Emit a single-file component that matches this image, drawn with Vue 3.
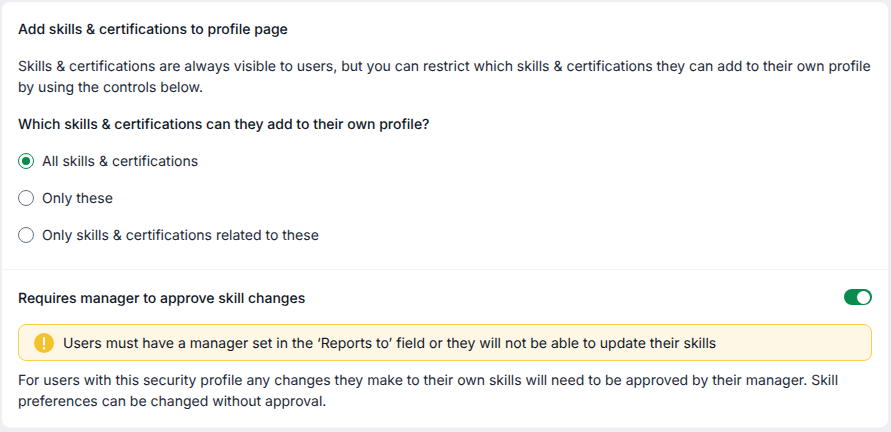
<script setup>
const options = [
  { label: 'All skills & certifications', checked: true },
  { label: 'Only these', checked: false },
  { label: 'Only skills & certifications related to these', checked: false },
]
</script>

<template>
  <div class="page">
    <div class="card">
      <section class="top">
        <h3 class="title">Add skills &amp; certifications to profile page</h3>
        <p class="text">Skills &amp; certifications are always visible to users, but you can restrict which skills &amp; certifications they can add to their own profile by using the controls below.</p>
        <h4 class="title">Which skills &amp; certifications can they add to their own profile?</h4>
        <div class="radios">
          <label v-for="o in options" :key="o.label" class="radio">
            <span class="dot" :class="{ on: o.checked }"></span>
            <span>{{ o.label }}</span>
          </label>
        </div>
      </section>
      <section class="bottom">
        <div class="row">
          <h3 class="title">Requires manager to approve skill changes</h3>
          <span class="toggle"><span class="knob"></span></span>
        </div>
        <div class="alert">
          <svg class="icon" width="20" height="20" viewBox="0 0 20 20">
            <circle cx="10" cy="10" r="10" fill="#f4c22b" />
            <rect x="9" y="4" width="2" height="8.5" rx="1" fill="#fff" />
            <circle cx="10" cy="15.2" r="1.2" fill="#fff" />
          </svg>
          <span class="alert-text">Users must have a manager set in the ‘Reports to’ field or they will not be able to update their skills</span>
        </div>
        <p class="text note">For users with this security profile any changes they make to their own skills will need to be approved by their manager. Skill preferences can be changed without approval.</p>
      </section>
    </div>
  </div>
</template>

<style>
html, body { margin: 0; background: #eeeef3; }
</style>

<style scoped>
.page {
  width: 891px;
  height: 432px;
  box-sizing: border-box;
  padding: 2px 3px 4px 2px;
  background: #eeeef3;
  font-family: Inter, "Liberation Sans", sans-serif;
  font-size: 14px;
  line-height: 21px;
  color: #101828;
  text-rendering: geometricPrecision;
}
.card {
  height: 426px;
  box-sizing: border-box;
  background: #fff;
  border-radius: 8px;
  border-bottom: 1px solid #f4f4f6;
  overflow: hidden;
}
.top {
  padding: 16.5px 16px 23.5px;
  border-bottom: 1px solid #f3f3f6;
}
.bottom { padding: 17.5px 16px 0; }
.title { margin: 0; font-size: 14px; line-height: 21px; font-weight: 460; }
.text { margin: 16px 0; color: #1d2939; }
.note { margin: 8.5px 0 0; }
.radios { display: flex; flex-direction: column; gap: 16px; margin-top: 16px; }
.radio { display: flex; align-items: center; gap: 8px; color: #1d2939; }
.dot {
  width: 16px;
  height: 16px;
  box-sizing: border-box;
  border: 1px solid #667085;
  border-radius: 50%;
  background: #fff;
  display: flex;
  align-items: center;
  justify-content: center;
}
.dot.on { border-color: #098a4e; }
.dot.on::after {
  content: "";
  width: 8px;
  height: 8px;
  border-radius: 50%;
  background: #098a4e;
}
.row { display: flex; align-items: center; justify-content: space-between; }
.toggle {
  width: 28px;
  height: 16px;
  margin-bottom: 2px;
  box-sizing: border-box;
  padding: 1.5px 2px;
  border-radius: 8px;
  background: #098a4e;
  display: flex;
  justify-content: flex-end;
}
.knob { width: 13px; height: 13px; border-radius: 50%; background: #fff; }
.alert {
  margin-top: 15.5px;
  height: 37px;
  box-sizing: border-box;
  padding: 1px 15px 0;
  display: flex;
  align-items: center;
  gap: 9px;
  background: #fef7e6;
  border: 1px solid #f9cf50;
  border-radius: 8px;
  color: #101828;
}
.alert-text { letter-spacing: 0.02px; }
.icon { flex: none; }
</style>
